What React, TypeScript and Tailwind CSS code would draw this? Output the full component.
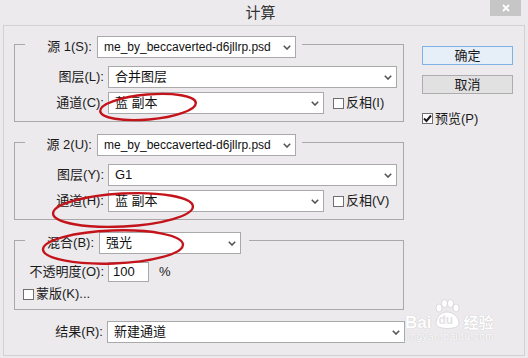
import React from 'react';

const font = { fontFamily: '"Liberation Sans", "Noto Sans CJK SC", sans-serif' };

const Chevron: React.FC = () => (
    <svg width="8" height="5" viewBox="0 0 8 5" className="shrink-0">
        <polyline points="0.8,0.8 4,4 7.2,0.8" fill="none" stroke="#555" strokeWidth="1.6" />
    </svg>
);

const Select: React.FC<{ value: string; width: string; small?: boolean }> = ({ value, width, small }) => (
    <div className={`${width} h-[22px] bg-white border border-[#a9a9a9] flex items-center justify-between pl-[6px] pr-[4px] ${small ? 'text-[12px]' : 'text-[13px]'} text-[#111] shrink-0`}>
        <span className="whitespace-nowrap overflow-hidden">{value}</span>
        <Chevron />
    </div>
);

const CheckBox: React.FC<{ checked?: boolean }> = ({ checked }) => (
    <div className="w-[11px] h-[11px] bg-white border border-[#6f6f6f] flex items-center justify-center shrink-0">
        {checked && (
            <svg width="9" height="9" viewBox="0 0 9 9">
                <polyline points="1,4.5 3.5,7 8,1.5" fill="none" stroke="#1a1a1a" strokeWidth="2" />
            </svg>
        )}
    </div>
);

const Label: React.FC<{ text: string }> = ({ text }) => (
    <div className="w-[91px] pr-[2px] text-right text-[13px] text-[#1a1a1a] whitespace-nowrap shrink-0">{text}</div>
);

const Legend: React.FC<{ label: string; value: string; labelW: string; selectW: string; pr: string; small?: boolean }> = ({ label, value, labelW, selectW, pr, small }) => (
    <div className={`-mt-[9px] ml-[10px] w-fit flex items-center bg-[#eceaed] ${pr}`}>
        <div className={`${labelW} pr-[5px] text-right text-[13px] text-[#1a1a1a] whitespace-nowrap`}>{label}</div>
        <Select value={value} width={selectW} small={small} />
    </div>
);

const SourceGroup: React.FC<{ n: string; key1: string; layerKey: string; layer: string; chKey: string; invKey: string; mt: string }> = ({ n, key1, layerKey, layer, chKey, invKey, mt }) => (
    <div className={`${mt} w-[390px] border border-[#a9a9a9] pb-[7px]`}>
        <Legend label={`源 ${n}(${key1}):`} value="me_by_beccaverted-d6jllrp.psd" labelW="w-[72px]" selectW="w-[199px]" pr="pr-[6px]" small />
        <div className="mt-[8px] flex items-center">
            <Label text={`图层(${layerKey}):`} />
            <div className="ml-[2px]"><Select value={layer} width="w-[289px]" /></div>
        </div>
        <div className="mt-[4px] flex items-center">
            <Label text={`通道(${chKey}):`} />
            <div className="ml-[2px]"><Select value="蓝 副本" width="w-[216px]" /></div>
            <div className="ml-[9px]"><CheckBox /></div>
            <span className="ml-[2px] text-[13px] text-[#1a1a1a]">反相({invKey})</span>
        </div>
    </div>
);

const App: React.FC = () => {
    return (
        <div className="w-[528px] h-[358px] bg-[#eceaed] overflow-hidden relative" style={font}>
            {/* title bar */}
            <div className="h-[25px] flex items-start">
                <div className="flex-1" />
                <div className="pt-[2px] text-[15px] text-[#333]">计算</div>
                <div className="flex-1 flex justify-end pr-[7px]">
                    <div className="w-[31px] h-[16px] bg-[#c6c6c6] flex items-center justify-center">
                        <svg width="8" height="8" viewBox="0 0 8 8">
                            <path d="M1 1 L7 7 M7 1 L1 7" stroke="#fff" strokeWidth="1.8" />
                        </svg>
                    </div>
                </div>
            </div>

            {/* body */}
            <div className="mx-[3px] h-[331px] border border-[#d2d2d2] flex">
                <div className="ml-[10px] w-[393px] flex flex-col">
                    <SourceGroup n="1" key1="S" layerKey="L" layer="合并图层" chKey="C" invKey="I" mt="mt-[18px]" />
                    <SourceGroup n="2" key1="U" layerKey="Y" layer="G1" chKey="H" invKey="V" mt="mt-[20px]" />

                    <div className="mt-[20px] w-[390px] border border-[#a9a9a9] pb-[7px]">
                        <Legend label="混合(B):" value="强光" labelW="w-[74px]" selectW="w-[142px]" pr="pr-[8px]" />
                        <div className="mt-[8px] flex items-center">
                            <Label text="不透明度(O):" />
                            <div className="ml-[2px] w-[41px] h-[20px] bg-white border border-[#a9a9a9] pl-[4px] text-[13px] leading-[18px] text-[#111]">100</div>
                            <span className="ml-[10px] text-[13px] text-[#1a1a1a]">%</span>
                        </div>
                        <div className="mt-[4px] h-[16px] flex items-center pl-[8px]">
                            <CheckBox />
                            <span className="ml-[2px] text-[13px] text-[#1a1a1a]">蒙版(K)...</span>
                        </div>
                    </div>

                    <div className="mt-[11px] flex items-center">
                        <Label text="结果(R):" />
                        <div className="ml-[2px]"><Select value="新建通道" width="w-[298px]" /></div>
                    </div>
                </div>

                <div className="ml-[15px] mt-[20px] w-[91px] flex flex-col">
                    <button className="h-[19px] border border-[#7fb2e5] bg-[#e6eef7] text-[13px] leading-[17px] text-[#1a1a1a]">确定</button>
                    <button className="mt-[10px] h-[19px] border border-[#adadad] bg-[#e1e1e1] text-[13px] leading-[17px] text-[#1a1a1a]">取消</button>
                    <div className="mt-[15px] flex items-center">
                        <CheckBox checked />
                        <span className="ml-[2px] text-[13px] text-[#1a1a1a]">预览(P)</span>
                    </div>
                </div>
            </div>

            {/* red annotation marks */}
            <svg className="absolute left-0 top-0 pointer-events-none" width="528" height="358">
                <g fill="none" stroke="#c4141b" strokeWidth="2.4">
                    <ellipse cx="148" cy="107" rx="48" ry="12.5" transform="rotate(-5 148 107)" />
                    <ellipse cx="123" cy="210" rx="70" ry="16.5" transform="rotate(-3 123 210)" />
                    <ellipse cx="113" cy="247" rx="70" ry="16.5" transform="rotate(-2 113 247)" />
                </g>
            </svg>

            {/* watermark */}
            <div className="absolute left-[405px] top-[299px] pointer-events-none text-white [text-shadow:0_0_1px_#b5b5b5]">
                <div className="flex items-end">
                    <span className="text-[17px] font-bold leading-[17px]">Bai</span>
                    <div className="relative w-[30px] h-[32px] ml-[1px]">
                        <svg width="30" height="32" viewBox="0 0 30 32" className="absolute left-0 top-0">
                            <g fill="#fff" stroke="#c8c8c8" strokeWidth="0.6">
                                <ellipse cx="7" cy="9" rx="3" ry="4" />
                                <ellipse cx="12.5" cy="4.5" rx="3" ry="4" />
                                <ellipse cx="18.5" cy="4.5" rx="3" ry="4" />
                                <ellipse cx="24" cy="9" rx="3" ry="4" />
                                <path d="M4 25 C4 17 10 13 15 13 C20 13 27 17 27 25 C27 31 4 31 4 25 Z" />
                            </g>
                        </svg>
                        <span className="absolute left-[6px] top-[15px] text-[12px] font-bold leading-[12px] text-[#e4e2e6] [text-shadow:none]">du</span>
                    </div>
                    <span className="ml-[1px] text-[15px] font-bold leading-[17px]">经验</span>
                </div>
                <div className="text-[10px] leading-[10px] mt-[1px] tracking-[0.5px]">jingyan.baidu.com</div>
            </div>
        </div>
    );
};

export default App;
